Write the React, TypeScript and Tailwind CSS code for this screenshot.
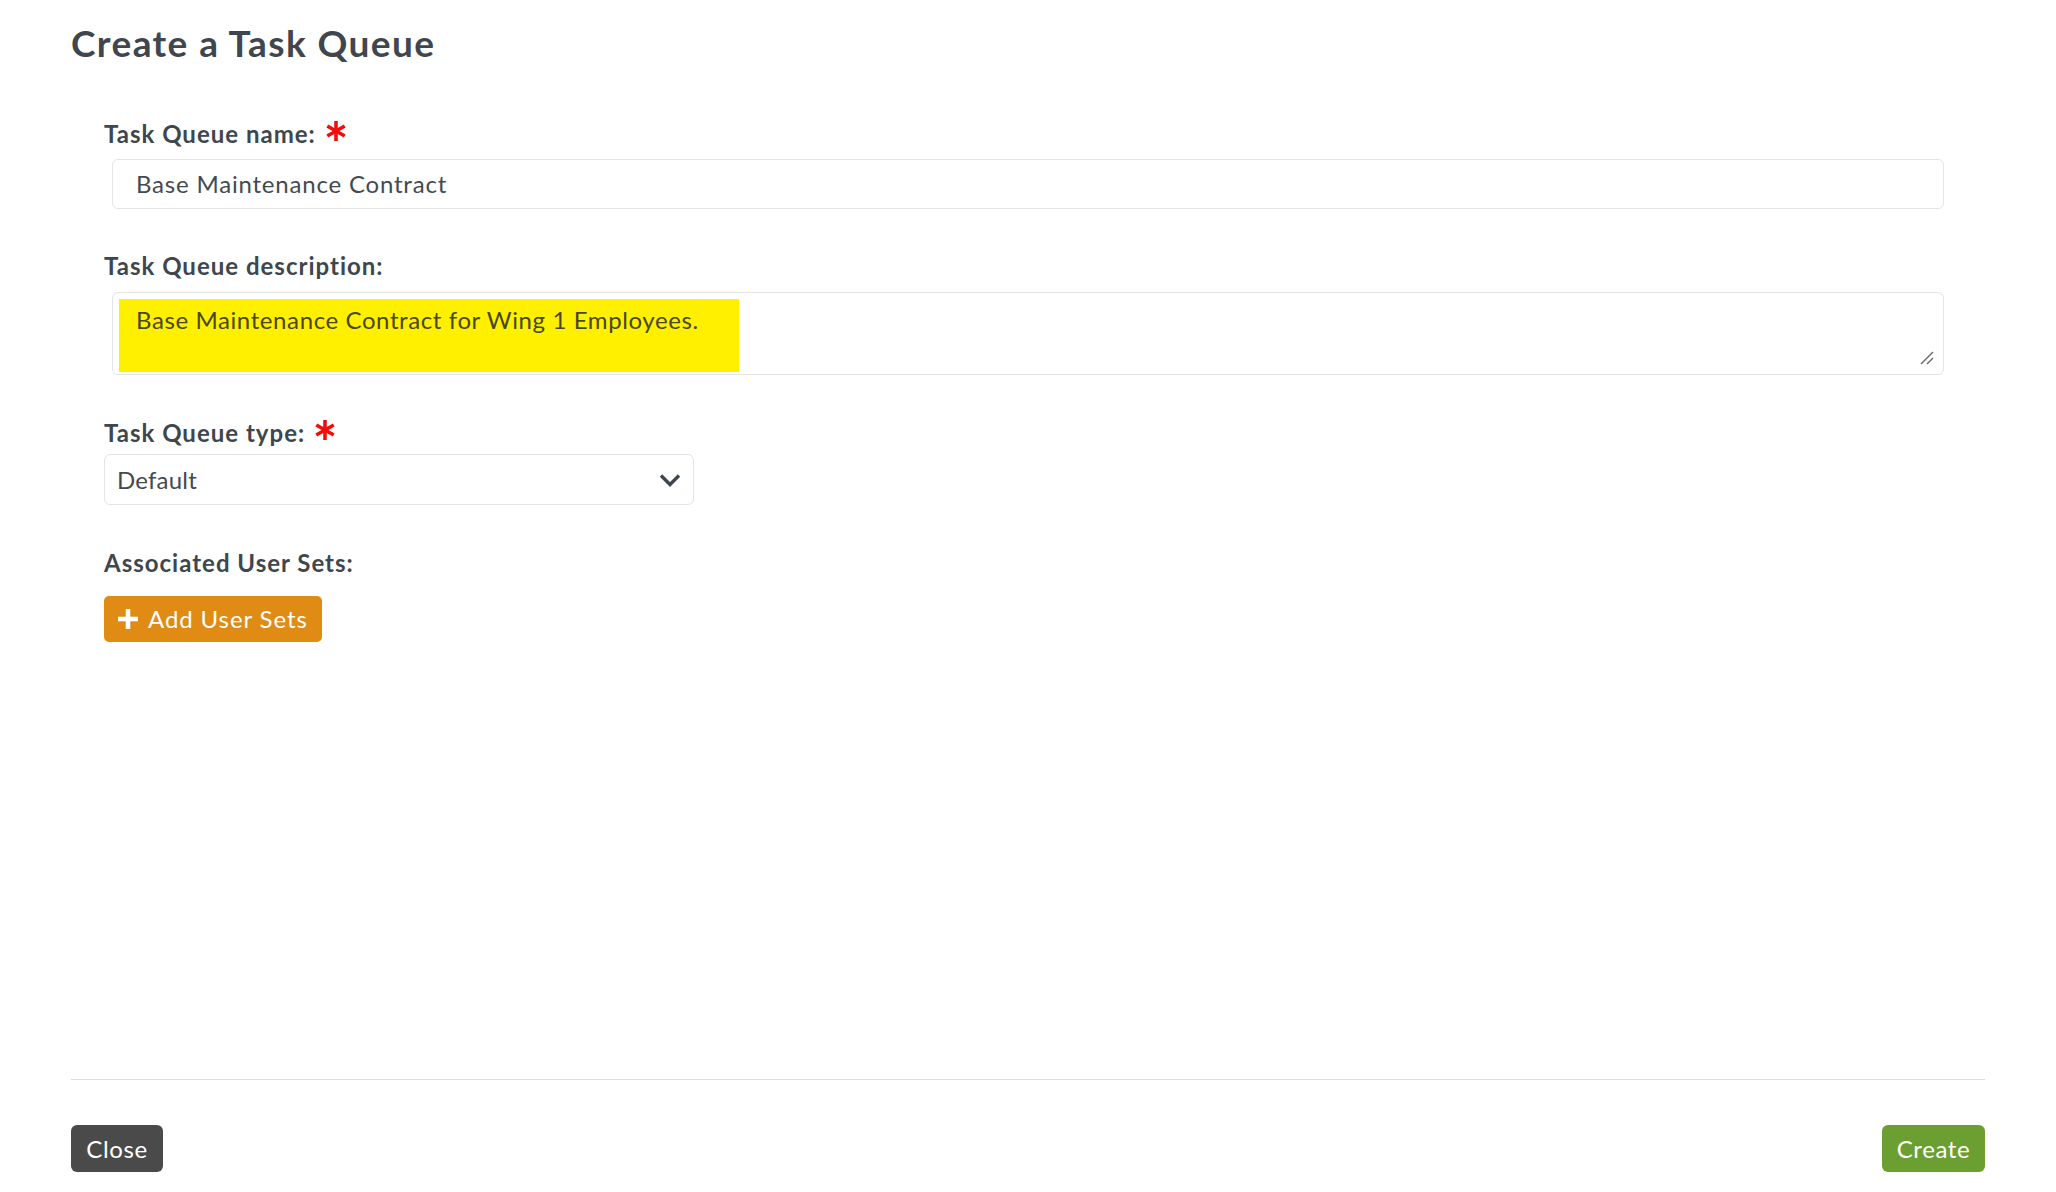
import React from 'react';

const RequiredMark = () => (
  <svg width="20" height="22" viewBox="0 0 20 22" className="ml-[10px] -mt-[6px] shrink-0">
    <g stroke="#f20d0d" strokeWidth="3.6">
      <line x1="10" y1="1" x2="10" y2="21" />
      <line x1="1.3" y1="6" x2="18.7" y2="16" />
      <line x1="1.3" y1="16" x2="18.7" y2="6" />
    </g>
  </svg>
);

const FieldLabel: React.FC<{ children: React.ReactNode; required?: boolean; className?: string }> = ({
  children,
  required,
  className = '',
}) => (
  <div
    className={`flex items-center h-[26px] text-[24px] leading-[26px] tracking-[1px] font-bold text-[#3e464e] ${className}`}
  >
    <span>{children}</span>
    {required && <RequiredMark />}
  </div>
);

export default function App() {
  return (
    <div
      className="h-screen w-full bg-white flex flex-col px-[71px] overflow-hidden"
      style={{ fontFamily: 'Lato, "Open Sans", sans-serif' }}
    >
      {/* Header */}
      <h1 className="pt-[21px] text-[37px] leading-[44px] tracking-[1.4px] font-bold text-[#3f464e]">
        Create a Task Queue
      </h1>

      {/* Form */}
      <div className="flex flex-col pl-[33px] pr-[41px]">
        <FieldLabel required className="mt-[56px]">
          Task Queue name:
        </FieldLabel>
        <div className="mt-[12px] ml-[8px] h-[50px] flex items-center border border-[#e4e4e4] rounded-[6px] pl-[23px] text-[24px] tracking-[0.8px] text-[#434a52]">
          Base Maintenance Contract
        </div>

        <FieldLabel className="mt-[44px]">Task Queue description:</FieldLabel>
        <div className="relative mt-[13px] ml-[8px] h-[83px] border border-[#e4e4e4] rounded-[6px] p-[6px]">
          <div className="w-[620px] h-[73px] bg-[#fff000] pl-[17px] pt-[6px] text-[24px] leading-[30px] tracking-[0.6px] text-[#4a4720]">
            Base Maintenance Contract for Wing 1 Employees.
          </div>
          <svg width="16" height="16" viewBox="0 0 16 16" className="absolute right-[8px] bottom-[8px]">
            <g stroke="#6b6b6b" strokeWidth="1.4">
              <line x1="2" y1="14" x2="14" y2="2" />
              <line x1="8" y1="14" x2="14" y2="8" />
            </g>
          </svg>
        </div>

        <FieldLabel required className="mt-[45px]">
          Task Queue type:
        </FieldLabel>
        <div className="mt-[8px] w-[590px] h-[51px] flex items-center justify-between border border-[#e4e4e4] rounded-[6px] pl-[12px] pr-[12px] text-[24px] tracking-[0.2px] text-[#434a52]">
          <span>Default</span>
          <svg width="22" height="14" viewBox="0 0 22 14">
            <polyline points="2,2.5 11,11.5 20,2.5" fill="none" stroke="#3e464e" strokeWidth="3.4" />
          </svg>
        </div>

        <FieldLabel className="mt-[45px]">Associated User Sets:</FieldLabel>
        <div className="mt-[20px]">
          <button className="h-[46px] flex items-center gap-[10px] bg-[#e08b14] rounded-[5px] pl-[14px] pr-[14px] text-[24px] tracking-[0.9px] text-white">
            <svg width="20" height="20" viewBox="0 0 20 20">
              <g stroke="#ffffff" strokeWidth="4.6">
                <line x1="10" y1="0" x2="10" y2="20" />
                <line x1="0" y1="10" x2="20" y2="10" />
              </g>
            </svg>
            <span>Add User Sets</span>
          </button>
        </div>
      </div>

      <div className="flex-1" />

      {/* Footer */}
      <div className="border-t border-[#dddddd] pt-[45px] pb-[20px] flex justify-between">
        <button className="h-[47px] w-[92px] flex items-center justify-center bg-[#4a4a4a] rounded-[6px] text-[24px] tracking-[0.6px] text-white">
          Close
        </button>
        <button className="h-[47px] w-[103px] flex items-center justify-center bg-[#6c9f31] rounded-[6px] text-[24px] tracking-[0.6px] text-white">
          Create
        </button>
      </div>
    </div>
  );
}
